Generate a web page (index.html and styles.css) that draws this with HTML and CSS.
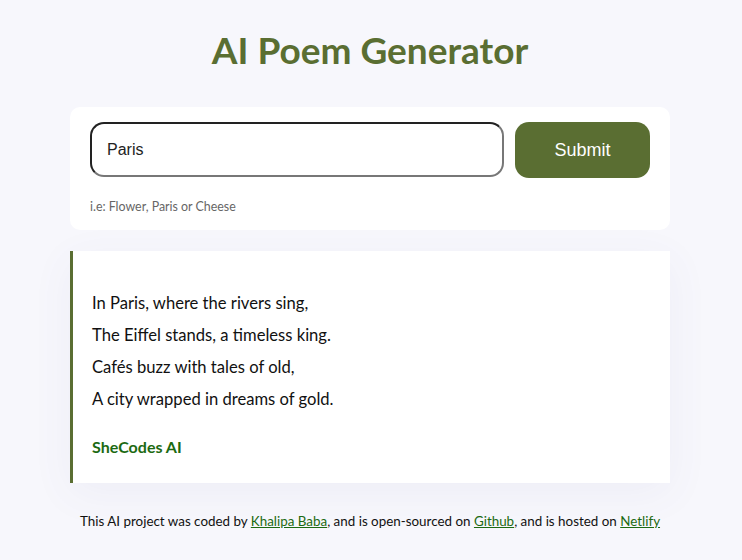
FILE: index.html
```html
<!DOCTYPE html>
<html>
<head>
<meta charset="utf-8">
<link rel="stylesheet" href="styles.css">
</head>
<body>
<div class="container">
  <h1 class="title">AI Poem Generator</h1>
  <form class="search-card">
    <div class="row">
      <input class="search-input" type="text" value="Paris">
      <button class="submit" type="button">Submit</button>
    </div>
    <div class="hint">i.e: Flower, Paris or Cheese</div>
  </form>
  <div class="poem">
    <p>In Paris, where the rivers sing,<br>The Eiffel stands, a timeless king.<br>Cafés buzz with tales of old,<br>A city wrapped in dreams of gold.</p>
    <div class="sign">SheCodes AI</div>
  </div>
  <footer class="footer">This AI project was coded by <a href="#">Khalipa Baba</a>, and is open-sourced on <a href="#">Github</a>, and is hosted on <a href="#">Netlify</a></footer>
</div>
</body>
</html>
```
FILE: styles.css
```css
body {
  margin: 0;
  background: #f7f7fc;
  font-family: Lato, "DejaVu Sans", sans-serif;
  color: #111;
}
.container {
  width: 600px;
  margin: 0 auto;
  padding-top: 28px;
  position: relative;
  left: -1px;
}
.title {
  margin: 0;
  text-align: center;
  color: #5a6e32;
  font-size: 37px;
  font-weight: 700;
  line-height: 44px;
}
.search-card {
  margin: 35px 0 0;
  background: #fff;
  border-radius: 10px;
  padding: 15px 20px 16px;
}
.row {
  display: flex;
  gap: 11px;
}
.search-input {
  flex: 1;
  height: 55px;
  box-sizing: border-box;
  border: 2px solid #222;
  border-right-color: #777;
  border-bottom-color: #777;
  border-radius: 14px;
  padding: 0 15px;
  font-family: "Liberation Sans", Arial, sans-serif;
  font-size: 16px;
  color: #222;
  outline: none;
}
.submit {
  width: 135px;
  height: 56px;
  border: none;
  border-radius: 14px;
  background: #5a6e32;
  color: #fff;
  font-family: "Liberation Sans", Arial, sans-serif;
  font-size: 18px;
}
.hint {
  margin-top: 21px;
  font-size: 12.4px;
  color: #666;
  line-height: 15px;
}
.poem {
  margin-top: 21px;
  background: #fff;
  border-left: 3px solid #5a6e32;
  padding: 36px 19px 20px;
  box-shadow: 0 10px 40px rgba(90, 90, 160, 0.06);
}
.poem p {
  margin: 0;
  font-size: 16.6px;
  line-height: 32px;
}
.sign {
  margin-top: 16px;
  font-weight: 700;
  color: #1c6a12;
  font-size: 16px;
  line-height: 32px;
}
.footer {
  margin-top: 29px;
  text-align: center;
  font-size: 13.4px;
  line-height: 18px;
}
.footer a {
  color: #1c6a12;
}
```
